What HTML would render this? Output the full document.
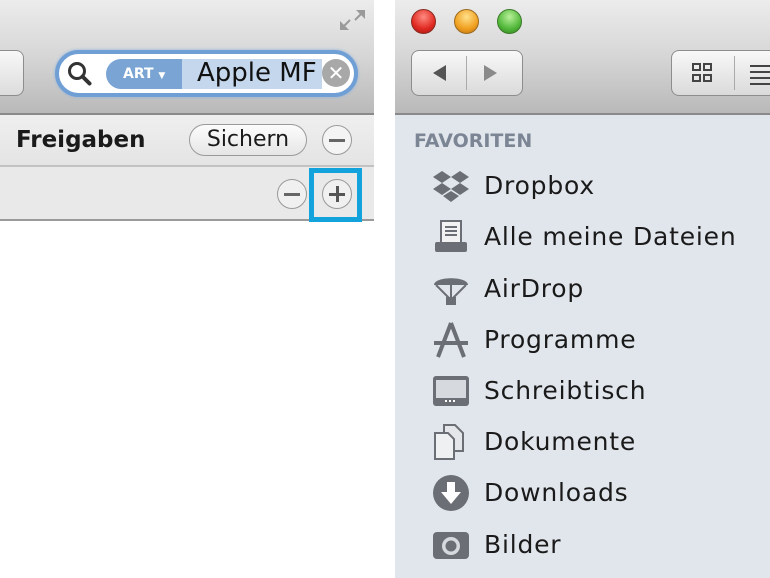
<!DOCTYPE html>
<html><head><meta charset="utf-8"><style>
*{margin:0;padding:0;box-sizing:border-box}
body{width:770px;height:578px;background:#fff;position:relative;overflow:hidden;font-family:"DejaVu Sans","Liberation Sans",sans-serif}
.abs{position:absolute}
.tb{background:linear-gradient(#ececec,#d6d6d6 50%,#b9b9b9);border-bottom:2px solid #8a8a8a}
.item{position:absolute;left:484px;font-size:25px;letter-spacing:0.8px;color:#1a1a1a;line-height:30px;white-space:nowrap}
.ic{position:absolute;left:432px;width:38px;height:38px}
</style></head><body>
<!-- left panel -->
<div class="abs tb" style="left:0;top:0;width:374px;height:115px"></div>
<div class="abs" style="left:-20px;top:50px;width:44px;height:46px;border:1px solid #8d8d8d;border-radius:8px;background:linear-gradient(#f8f8f8,#dcdcdc)"></div>
<svg class="abs" style="left:336px;top:6px" width="32" height="28" viewBox="0 0 32 28"><path d="M20 4h9v9zM4 24v-9l9 9z" fill="#9a9a9a"/><path d="M27 6l-8 8M6 22l8-8" stroke="#9a9a9a" stroke-width="2"/></svg>
<div class="abs" style="left:55px;top:50px;width:303px;height:47px;border-radius:24px;border:4px solid #6f9fd4;background:#fff;box-shadow:0 0 3px #8fb4e0"></div>
<svg class="abs" style="left:66px;top:60px" width="28" height="28" viewBox="0 0 28 28"><circle cx="11" cy="11" r="7.5" fill="none" stroke="#333" stroke-width="3"/><path d="M16.5 16.5l7 7" stroke="#333" stroke-width="4" stroke-linecap="round"/></svg>
<div class="abs" style="left:106px;top:59px;width:76px;height:30px;border-radius:15px 0 0 15px;background:#7aa4d3;color:#fff;font-size:14px;font-weight:bold;line-height:30px;padding-left:17px">ART <span style="font-size:9px">▼</span></div>
<div class="abs" style="left:182px;top:59px;width:140px;height:30px;background:#c5d7ec"></div>
<div class="abs" style="left:197px;top:56px;font-size:26px;color:#111;line-height:34px;white-space:nowrap">Apple MF</div>
<div class="abs" style="left:322px;top:59px;width:28px;height:28px;border-radius:50%;background:#a8a8a8;color:#fff;font-size:20px;text-align:center;line-height:28px">✕</div>
<div class="abs" style="left:0;top:115px;width:374px;height:52px;background:linear-gradient(#efefef,#e4e4e4);border-bottom:2px solid #c2c2c2"></div>
<div class="abs" style="left:16px;top:124px;font-size:23px;font-weight:bold;color:#1a1a1a;line-height:32px">Freigaben</div>
<div class="abs" style="left:189px;top:124px;width:118px;height:32px;border-radius:16px;border:1px solid #9a9a9a;background:linear-gradient(#fcfcfc,#e6e6e6);font-size:22px;color:#1a1a1a;text-align:center;line-height:30px">Sichern</div>
<div class="abs" style="left:322px;top:125px;width:30px;height:30px;border-radius:50%;border:1px solid #999;background:#f4f4f4"></div><div class="abs" style="left:329px;top:139px;width:16px;height:3px;background:#666"></div>
<div class="abs" style="left:0;top:167px;width:374px;height:54px;background:#e9e9e9;border-bottom:2px solid #9a9a9a"></div>
<div class="abs" style="left:277px;top:179px;width:30px;height:30px;border-radius:50%;border:1px solid #999;background:#f0f0f0"></div><div class="abs" style="left:284px;top:193px;width:16px;height:3px;background:#666"></div>
<div class="abs" style="left:309px;top:168px;width:53px;height:54px;border:5px solid #12a2dc"></div>
<div class="abs" style="left:322px;top:179px;width:30px;height:30px;border-radius:50%;border:1px solid #999;background:#f0f0f0"></div><div class="abs" style="left:329px;top:193px;width:16px;height:3px;background:#555"></div><div class="abs" style="left:335.5px;top:186px;width:3px;height:16px;background:#555"></div>
<!-- right panel -->
<div class="abs tb" style="left:395px;top:0;width:375px;height:115px"></div>
<div class="abs" style="left:411px;top:9px;width:25px;height:25px;border-radius:50%;background:radial-gradient(circle at 50% 30%,#ff8a80,#e02a22 60%,#a01512);border:1px solid #8a2a20"></div>
<div class="abs" style="left:454px;top:9px;width:25px;height:25px;border-radius:50%;background:radial-gradient(circle at 50% 30%,#ffe08a,#f0a020 60%,#b86e10);border:1px solid #9a6a20"></div>
<div class="abs" style="left:497px;top:9px;width:25px;height:25px;border-radius:50%;background:radial-gradient(circle at 50% 30%,#b8f09a,#52b83a 60%,#2f7f20);border:1px solid #3b7a2a"></div>
<div class="abs" style="left:411px;top:50px;width:112px;height:46px;border:1px solid #8d8d8d;border-radius:8px;background:linear-gradient(#f8f8f8,#dadada)"></div>
<div class="abs" style="left:466px;top:56px;width:1px;height:34px;background:#aaa"></div>
<svg class="abs" style="left:430px;top:62px" width="80" height="22"><path d="M16 3v16L3 11z" fill="#555"/><path d="M54 3v16l13-8z" fill="#8a8a8a"/></svg>
<div class="abs" style="left:671px;top:50px;width:120px;height:46px;border:1px solid #8d8d8d;border-radius:8px;background:linear-gradient(#f8f8f8,#dadada)"></div>
<div class="abs" style="left:734px;top:56px;width:1px;height:34px;background:#aaa"></div>
<svg class="abs" style="left:692px;top:62px" width="80" height="24"><g fill="none" stroke="#444" stroke-width="2"><rect x="1" y="2" width="7" height="6"/><rect x="12" y="2" width="7" height="6"/><rect x="1" y="13" width="7" height="6"/><rect x="12" y="13" width="7" height="6"/></g><path d="M58 4h20M58 10h20M58 16h20M58 22h20" stroke="#444" stroke-width="2"/></svg>
<div class="abs" style="left:395px;top:115px;width:375px;height:463px;background:#e1e6ed"></div>
<div class="abs" style="left:414px;top:128px;font-size:19px;font-weight:bold;color:#7b8594;line-height:26px">FAVORITEN</div>
<svg class="ic" style="top:167px" viewBox="0 0 38 38"><g fill="#6b6f75"><path d="M10 4l9 6-9 6-9-6z"/><path d="M28 4l9 6-9 6-9-6z"/><path d="M10 16l9 6-9 6-9-6z"/><path d="M28 16l9 6-9 6-9-6z"/><path d="M19 24l8 5-8 6-8-6z"/></g></svg>
<div class="item" style="top:171px">Dropbox</div>
<svg class="ic" style="top:218px" viewBox="0 0 38 38"><rect x="9" y="3" width="20" height="22" fill="#f2f2f2" stroke="#6b6f75" stroke-width="2"/><path d="M13 9h12M13 13h12M13 17h12" stroke="#6b6f75" stroke-width="2"/><rect x="3" y="24" width="32" height="10" rx="2" fill="#6b6f75"/></svg>
<div class="item" style="top:222px">Alle meine Dateien</div>
<svg class="ic" style="top:270px" viewBox="0 0 38 38"><path d="M2 15C2 6 36 6 36 15z" fill="#6b6f75"/><path d="M4 15l13 13M34 15L21 28M19 15v13" stroke="#6b6f75" stroke-width="2"/><rect x="14" y="27" width="10" height="8" fill="#6b6f75"/></svg>
<div class="item" style="top:274px">AirDrop</div>
<svg class="ic" style="top:321px" viewBox="0 0 38 38"><path d="M19 2L6 36M19 2l13 34M2 22h34" stroke="#6b6f75" stroke-width="4" fill="none"/></svg>
<div class="item" style="top:325px">Programme</div>
<svg class="ic" style="top:372px" viewBox="0 0 38 38"><rect x="1" y="4" width="36" height="30" rx="3" fill="#6b6f75"/><rect x="4" y="8" width="30" height="18" fill="#d6d9de"/><path d="M13 29h12" stroke="#fff" stroke-width="2" stroke-dasharray="2 2"/></svg>
<div class="item" style="top:376px">Schreibtisch</div>
<svg class="ic" style="top:423px" viewBox="0 0 38 38"><path d="M12 2h11l8 8v18H12z" fill="#e4e6ea" stroke="#6b6f75" stroke-width="2"/><path d="M3 10h13l6 6v20H3z" fill="#eef0f2" stroke="#6b6f75" stroke-width="2"/></svg>
<div class="item" style="top:427px">Dokumente</div>
<svg class="ic" style="top:474px" viewBox="0 0 38 38"><circle cx="19" cy="19" r="18" fill="#6b6f75"/><path d="M15 8h8v10h6L19 30 9 18h6z" fill="#fff"/></svg>
<div class="item" style="top:478px">Downloads</div>
<svg class="ic" style="top:526px" viewBox="0 0 38 38"><rect x="1" y="6" width="36" height="27" rx="4" fill="#6b6f75"/><circle cx="19" cy="20" r="9" fill="#d6d9de"/><circle cx="19" cy="20" r="5.5" fill="#6b6f75"/></svg>
<div class="item" style="top:530px">Bilder</div>
</body></html>
